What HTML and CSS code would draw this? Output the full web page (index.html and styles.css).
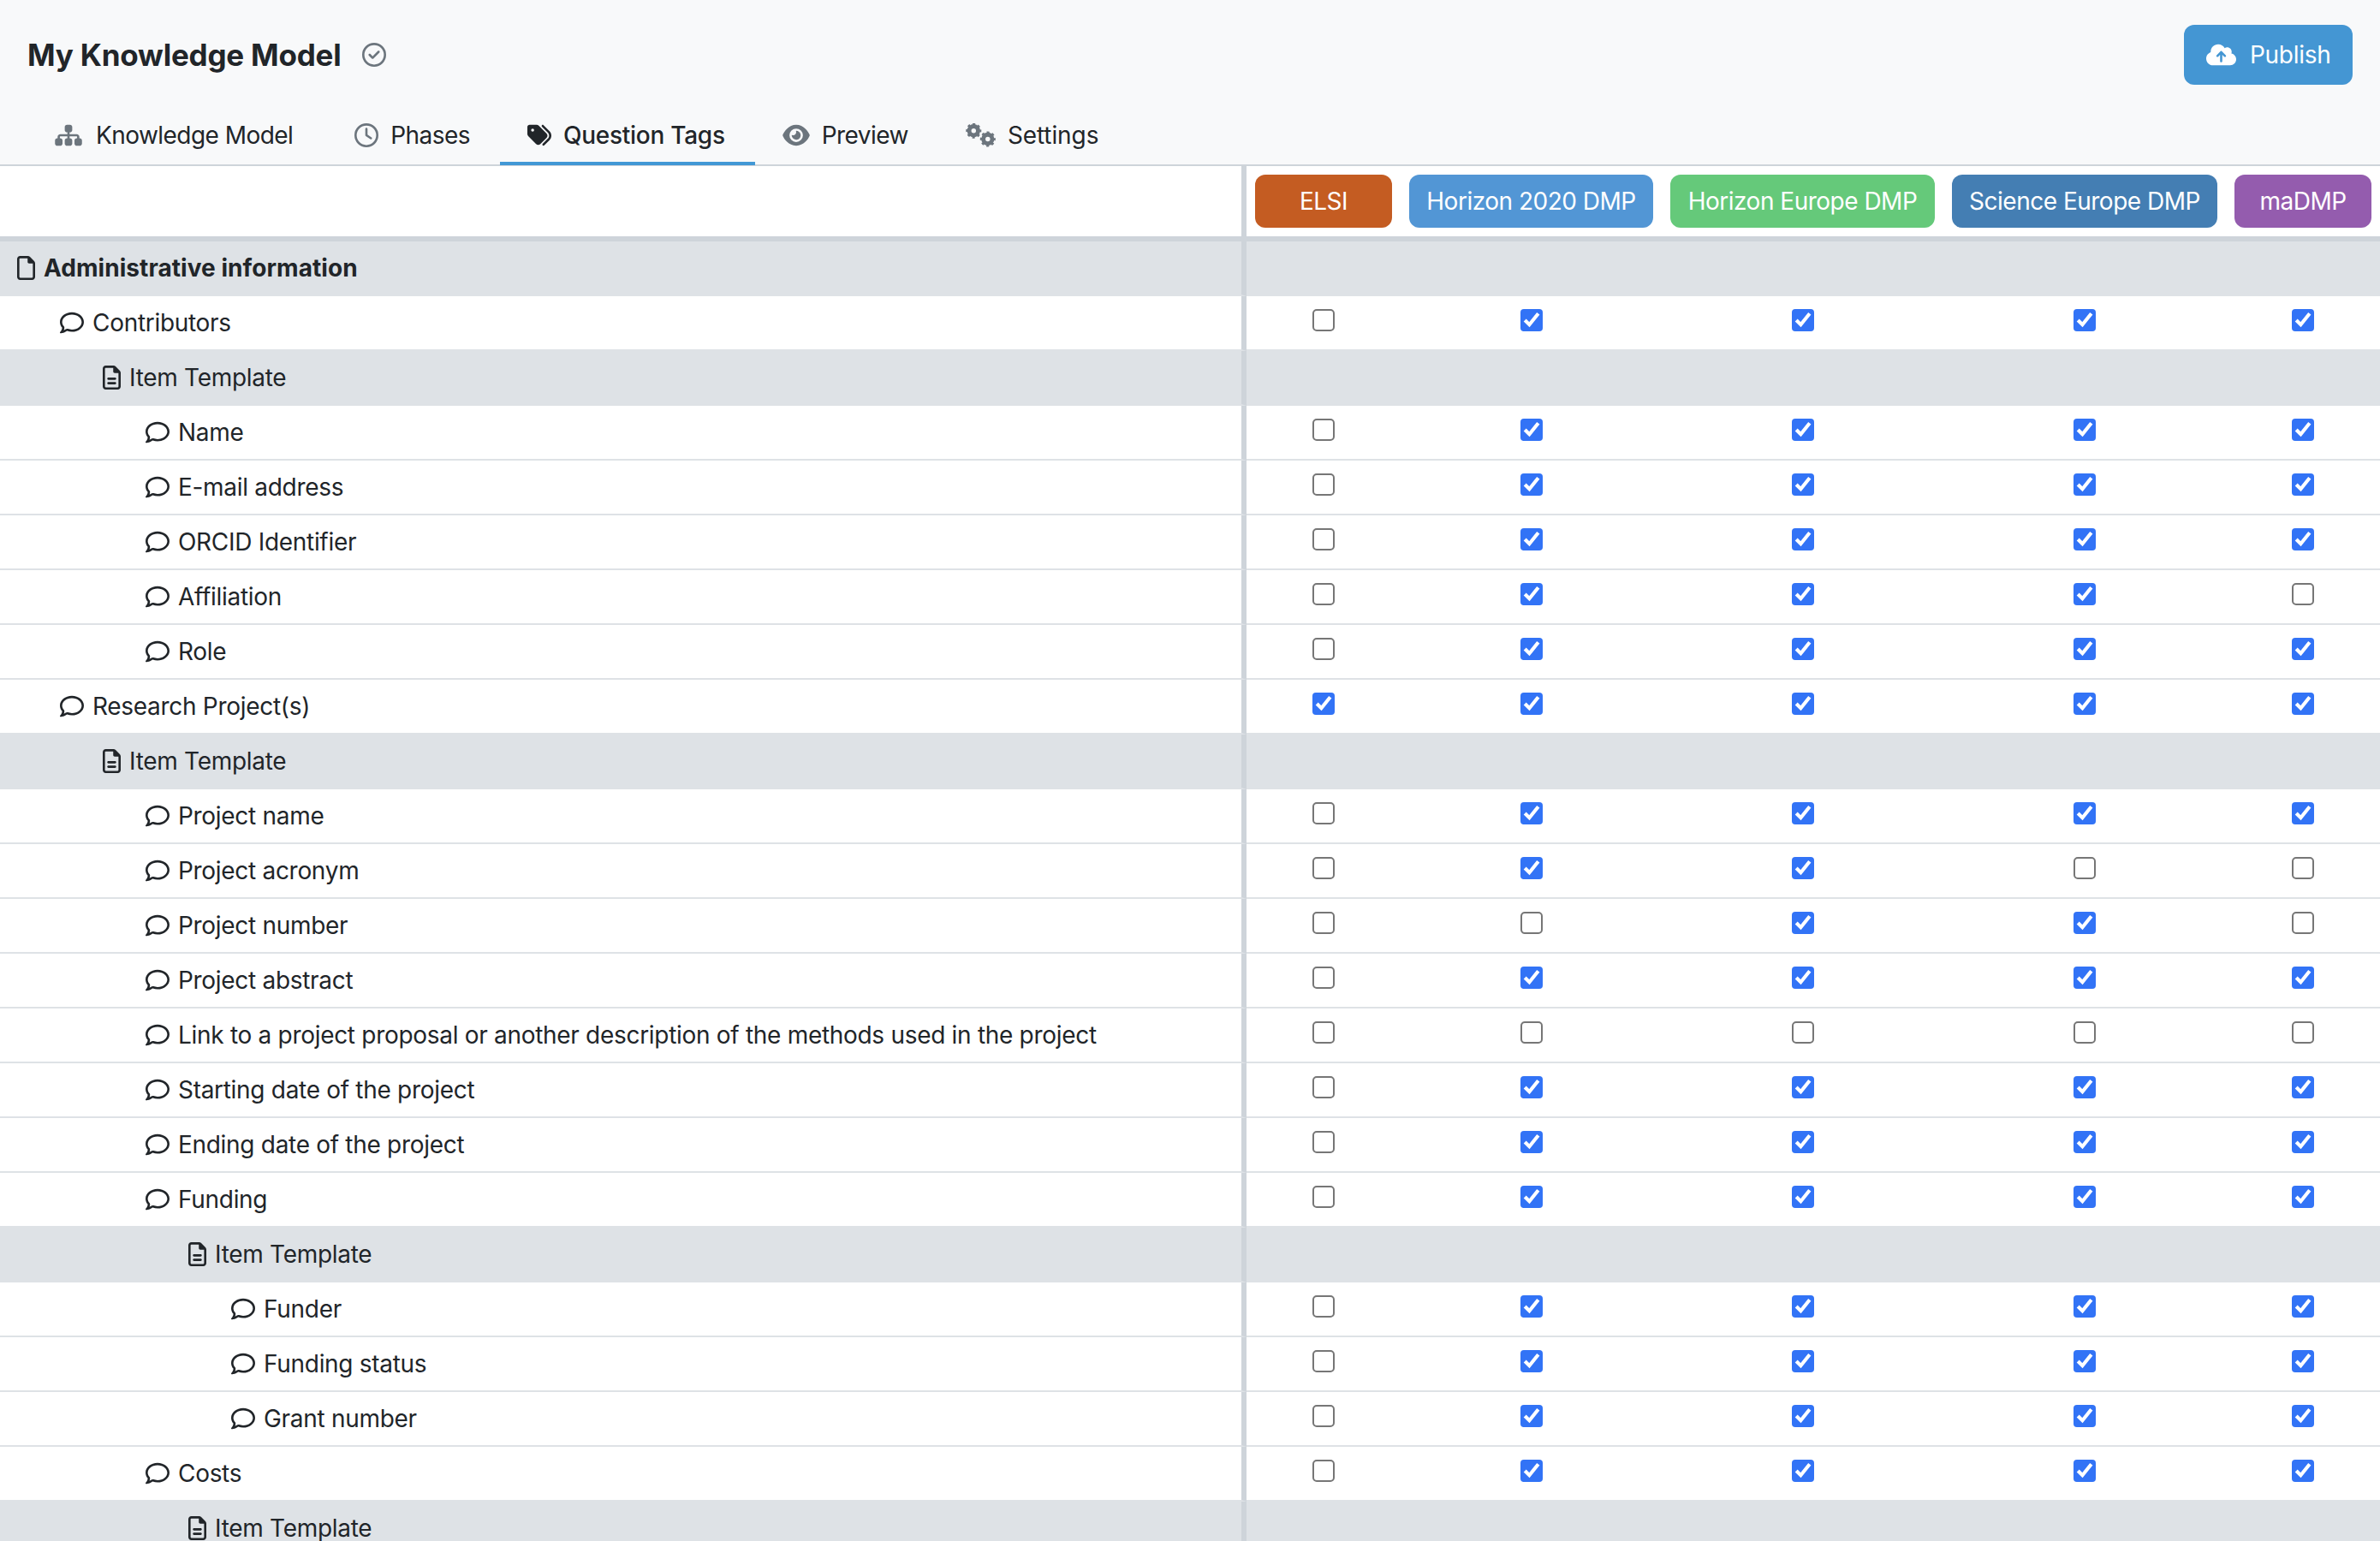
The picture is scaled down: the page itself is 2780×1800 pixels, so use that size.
FILE: index.html
```html
<!DOCTYPE html>
<html lang="en">
<head>
<meta charset="utf-8">
<title>My Knowledge Model</title>
<link rel="stylesheet" href="styles.css">
</head>
<body>
<svg class="defs" aria-hidden="true">
  <symbol id="i-comment" viewBox="0 0 512 512"><path d="M123.6 391.3c12.9-9.4 29.6-11.8 44.6-6.4c26.5 9.6 56.2 15.1 87.8 15.1c124.7 0 208-80.5 208-160s-83.3-160-208-160S48 160.5 48 240c0 32 12.4 62.8 35.7 89.2c8.6 9.7 12.8 22.5 11.8 35.5c-1.4 18.1-5.7 34.7-11.3 49.4c17-7.9 31.1-16.7 39.4-22.7zM21.2 431.9c1.8-2.7 3.5-5.4 5.1-8.1c10-16.6 19.5-38.4 21.4-62.9C17.7 326.8 0 285.1 0 240C0 125.1 114.6 32 256 32s256 93.1 256 208s-114.6 208-256 208c-37.1 0-72.3-6.4-104.1-17.9c-11.9 8.7-31.3 20.6-54.3 30.6c-15.1 6.6-32.3 12.6-50.1 16.1c-.8 .2-1.6 .3-2.4 .5c-4.4 .8-8.7 1.5-13.2 1.9c-.2 0-.5 .1-.7 .1c-5.1 .5-10.2 .8-15.3 .8c-6.5 0-12.3-3.9-14.8-9.9c-2.5-6-1.1-12.8 3.4-17.4c4.1-4.2 7.8-8.7 11.3-13.5c1.7-2.3 3.3-4.6 4.8-6.9c.1-.2 .2-.3 .3-.5z"/></symbol>
  <symbol id="i-file" viewBox="0 0 384 512"><path d="M320 464c8.8 0 16-7.2 16-16V160H256c-17.7 0-32-14.3-32-32V48H64c-8.8 0-16 7.2-16 16V448c0 8.8 7.2 16 16 16H320zM0 64C0 28.7 28.7 0 64 0H229.5c17 0 33.3 6.7 45.3 18.7l90.5 90.5c12 12 18.7 28.3 18.7 45.3V448c0 35.3-28.7 64-64 64H64c-35.3 0-64-28.7-64-64V64z"/></symbol>
  <symbol id="i-lines" viewBox="0 0 384 512"><path d="M320 464c8.8 0 16-7.2 16-16V160H256c-17.7 0-32-14.3-32-32V48H64c-8.8 0-16 7.2-16 16V448c0 8.8 7.2 16 16 16H320zM0 64C0 28.7 28.7 0 64 0H229.5c17 0 33.3 6.7 45.3 18.7l90.5 90.5c12 12 18.7 28.3 18.7 45.3V448c0 35.3-28.7 64-64 64H64c-35.3 0-64-28.7-64-64V64z"/><path d="M120 256c-13.3 0-24 10.7-24 24s10.7 24 24 24H264c13.3 0 24-10.7 24-24s-10.7-24-24-24H120zm0 96c-13.3 0-24 10.7-24 24s10.7 24 24 24H264c13.3 0 24-10.7 24-24s-10.7-24-24-24H120z"/></symbol>
</svg>

<header class="top">
  <div class="title-row">
    <div class="title-group">
      <h1 class="title">My Knowledge Model</h1>
      <svg class="saved" viewBox="0 0 512 512"><path d="M256 48a208 208 0 1 1 0 416 208 208 0 1 1 0-416zm0 464A256 256 0 1 0 256 0a256 256 0 1 0 0 512zM369 209c9.4-9.4 9.4-24.6 0-33.9s-24.6-9.4-33.9 0l-111 111-47-47c-9.4-9.4-24.6-9.4-33.9 0s-9.4 24.6 0 33.9l64 64c9.4 9.4 24.6 9.4 33.9 0L369 209z"/></svg>
    </div>
    <button class="publish" type="button">
      <svg class="publish-icon" viewBox="0 0 640 512"><path d="M144 480C64.5 480 0 415.5 0 336c0-62.8 40.2-116.2 96.2-135.9c-.1-2.7-.2-5.4-.2-8.1c0-88.4 71.6-160 160-160c59.3 0 111 32.2 138.7 80.2C409.9 102 428.3 96 448 96c53 0 96 43 96 96c0 12.2-2.3 23.8-6.4 34.6C596 238.4 640 290.1 640 352c0 70.7-57.3 128-128 128H144zm79-217c-9.4 9.4-9.4 24.6 0 33.9s24.6 9.4 33.9 0l39-39V392c0 13.3 10.7 24 24 24s24-10.7 24-24V257.9l39 39c9.4 9.4 24.6 9.4 33.9 0s9.4-24.6 0-33.9l-80-80c-9.4-9.4-24.6-9.4-33.9 0l-80 80z"/></svg>
      Publish
    </button>
  </div>
  <nav class="tabs">
    <a class="tab tab-km"><svg class="tab-icon wide" viewBox="0 0 576 512"><path d="M208 80c0-26.5 21.5-48 48-48h64c26.5 0 48 21.5 48 48v64c0 26.5-21.5 48-48 48h-8v40H464c30.9 0 56 25.1 56 56v32h8c26.5 0 48 21.5 48 48v64c0 26.5-21.5 48-48 48H464c-26.5 0-48-21.5-48-48V368c0-26.5 21.5-48 48-48h8V288c0-4.4-3.6-8-8-8H312v40h8c26.5 0 48 21.5 48 48v64c0 26.5-21.5 48-48 48H256c-26.5 0-48-21.5-48-48V368c0-26.5 21.5-48 48-48h8V280H112c-4.4 0-8 3.6-8 8v32h8c26.5 0 48 21.5 48 48v64c0 26.5-21.5 48-48 48H48c-26.5 0-48-21.5-48-48V368c0-26.5 21.5-48 48-48h8V288c0-30.9 25.1-56 56-56H264V192h-8c-26.5 0-48-21.5-48-48V80z"/></svg>Knowledge Model</a>
    <a class="tab tab-phases"><svg class="tab-icon" viewBox="0 0 512 512"><path d="M464 256A208 208 0 1 1 48 256a208 208 0 1 1 416 0zM0 256a256 256 0 1 0 512 0A256 256 0 1 0 0 256zM232 120V256c0 8 4 15.5 10.7 20l96 64c11 7.4 25.9 4.4 33.3-6.7s4.4-25.9-6.7-33.3L280 243.2V120c0-13.3-10.7-24-24-24s-24 10.7-24 24z"/></svg>Phases</a>
    <a class="tab active"><svg class="tab-icon" viewBox="0 0 512 512"><path d="M345 39.1L472.8 168.4c52.4 53 52.4 138.2 0 191.2L360.8 472.9c-9.3 9.4-24.5 9.5-33.9 .2s-9.5-24.5-.2-33.9L438.6 325.9c33.9-34.3 33.9-89.4 0-123.7L310.9 72.9c-9.3-9.4-9.2-24.6 .2-33.9s24.6-9.2 33.9 .2zM0 229.5V80C0 53.5 21.5 32 48 32H197.5c17 0 33.3 6.7 45.3 18.7l168 168c25 25 25 65.5 0 90.5L277.3 442.7c-25 25-65.5 25-90.5 0l-168-168C6.7 262.7 0 246.5 0 229.5zM144 144a32 32 0 1 0 -64 0 32 32 0 1 0 64 0z"/></svg>Question Tags</a>
    <a class="tab"><svg class="tab-icon wide" viewBox="0 0 576 512"><path d="M288 32c-80.8 0-145.5 36.8-192.6 80.6C48.6 156 17.3 208 2.5 243.7c-3.3 7.9-3.3 16.7 0 24.6C17.3 304 48.6 356 95.4 399.4C142.5 443.2 207.2 480 288 480s145.5-36.8 192.6-80.6c46.8-43.5 78.1-95.4 93-131.1c3.3-7.9 3.3-16.7 0-24.6c-14.9-35.7-46.2-87.7-93-131.1C433.5 68.8 368.8 32 288 32zM144 256a144 144 0 1 1 288 0 144 144 0 1 1 -288 0zm144-64c0 35.3-28.7 64-64 64c-7.1 0-13.9-1.2-20.3-3.3c-5.5-1.8-11.9 1.6-11.7 7.4c.3 6.9 1.3 13.8 3.2 20.7c13.7 51.2 66.4 81.6 117.6 67.9s81.6-66.4 67.9-117.6c-11.1-41.5-47.8-69.4-88.6-71.1c-5.8-.2-9.2 6.1-7.4 11.7c2.1 6.4 3.3 13.2 3.3 20.3z"/></svg>Preview</a>
    <a class="tab tab-settings"><svg class="tab-icon gears" viewBox="0 0 640 512"><g class="gear"><circle class="ring" cx="170" cy="159" r="95"/><circle class="teeth" cx="170" cy="159" r="145"/></g><g class="gear"><circle class="ring" cx="472" cy="337" r="95"/><circle class="teeth" cx="472" cy="337" r="145"/></g></svg>Settings</a>
  </nav>
</header>

<table class="tags-table">
  <colgroup><col class="c-main"><col class="c-elsi"><col class="c-h2020"><col class="c-he"><col class="c-se"><col class="c-ma"></colgroup>
  <thead>
    <tr>
      <th class="main"></th>
      <th><span class="tag elsi">ELSI</span></th>
      <th><span class="tag h2020">Horizon 2020 DMP</span></th>
      <th><span class="tag he">Horizon Europe DMP</span></th>
      <th><span class="tag se">Science Europe DMP</span></th>
      <th><span class="tag ma">maDMP</span></th>
    </tr>
  </thead>
  <tbody>
    <tr class="group"><td class="main"><div class="item lv0 strong"><svg class="ic file"><use href="#i-file"/></svg>Administrative information</div></td><td colspan="5"></td></tr>
    <tr><td class="main"><div class="item lv1"><svg class="ic bubble"><use href="#i-comment"/></svg>Contributors</div></td><td><input type="checkbox"></td><td><input type="checkbox" checked></td><td><input type="checkbox" checked></td><td><input type="checkbox" checked></td><td><input type="checkbox" checked></td></tr>
    <tr class="group"><td class="main"><div class="item lv2"><svg class="ic file"><use href="#i-lines"/></svg>Item Template</div></td><td colspan="5"></td></tr>
    <tr><td class="main"><div class="item lv3"><svg class="ic bubble"><use href="#i-comment"/></svg>Name</div></td><td><input type="checkbox"></td><td><input type="checkbox" checked></td><td><input type="checkbox" checked></td><td><input type="checkbox" checked></td><td><input type="checkbox" checked></td></tr>
    <tr><td class="main"><div class="item lv3"><svg class="ic bubble"><use href="#i-comment"/></svg>E-mail address</div></td><td><input type="checkbox"></td><td><input type="checkbox" checked></td><td><input type="checkbox" checked></td><td><input type="checkbox" checked></td><td><input type="checkbox" checked></td></tr>
    <tr><td class="main"><div class="item lv3"><svg class="ic bubble"><use href="#i-comment"/></svg>ORCID Identifier</div></td><td><input type="checkbox"></td><td><input type="checkbox" checked></td><td><input type="checkbox" checked></td><td><input type="checkbox" checked></td><td><input type="checkbox" checked></td></tr>
    <tr><td class="main"><div class="item lv3"><svg class="ic bubble"><use href="#i-comment"/></svg>Affiliation</div></td><td><input type="checkbox"></td><td><input type="checkbox" checked></td><td><input type="checkbox" checked></td><td><input type="checkbox" checked></td><td><input type="checkbox"></td></tr>
    <tr><td class="main"><div class="item lv3"><svg class="ic bubble"><use href="#i-comment"/></svg>Role</div></td><td><input type="checkbox"></td><td><input type="checkbox" checked></td><td><input type="checkbox" checked></td><td><input type="checkbox" checked></td><td><input type="checkbox" checked></td></tr>
    <tr><td class="main"><div class="item lv1"><svg class="ic bubble"><use href="#i-comment"/></svg>Research Project(s)</div></td><td><input type="checkbox" checked></td><td><input type="checkbox" checked></td><td><input type="checkbox" checked></td><td><input type="checkbox" checked></td><td><input type="checkbox" checked></td></tr>
    <tr class="group"><td class="main"><div class="item lv2"><svg class="ic file"><use href="#i-lines"/></svg>Item Template</div></td><td colspan="5"></td></tr>
    <tr><td class="main"><div class="item lv3"><svg class="ic bubble"><use href="#i-comment"/></svg>Project name</div></td><td><input type="checkbox"></td><td><input type="checkbox" checked></td><td><input type="checkbox" checked></td><td><input type="checkbox" checked></td><td><input type="checkbox" checked></td></tr>
    <tr><td class="main"><div class="item lv3"><svg class="ic bubble"><use href="#i-comment"/></svg>Project acronym</div></td><td><input type="checkbox"></td><td><input type="checkbox" checked></td><td><input type="checkbox" checked></td><td><input type="checkbox"></td><td><input type="checkbox"></td></tr>
    <tr><td class="main"><div class="item lv3"><svg class="ic bubble"><use href="#i-comment"/></svg>Project number</div></td><td><input type="checkbox"></td><td><input type="checkbox"></td><td><input type="checkbox" checked></td><td><input type="checkbox" checked></td><td><input type="checkbox"></td></tr>
    <tr><td class="main"><div class="item lv3"><svg class="ic bubble"><use href="#i-comment"/></svg>Project abstract</div></td><td><input type="checkbox"></td><td><input type="checkbox" checked></td><td><input type="checkbox" checked></td><td><input type="checkbox" checked></td><td><input type="checkbox" checked></td></tr>
    <tr><td class="main"><div class="item lv3"><svg class="ic bubble"><use href="#i-comment"/></svg>Link to a project proposal or another description of the methods used in the project</div></td><td><input type="checkbox"></td><td><input type="checkbox"></td><td><input type="checkbox"></td><td><input type="checkbox"></td><td><input type="checkbox"></td></tr>
    <tr><td class="main"><div class="item lv3"><svg class="ic bubble"><use href="#i-comment"/></svg>Starting date of the project</div></td><td><input type="checkbox"></td><td><input type="checkbox" checked></td><td><input type="checkbox" checked></td><td><input type="checkbox" checked></td><td><input type="checkbox" checked></td></tr>
    <tr><td class="main"><div class="item lv3"><svg class="ic bubble"><use href="#i-comment"/></svg>Ending date of the project</div></td><td><input type="checkbox"></td><td><input type="checkbox" checked></td><td><input type="checkbox" checked></td><td><input type="checkbox" checked></td><td><input type="checkbox" checked></td></tr>
    <tr><td class="main"><div class="item lv3"><svg class="ic bubble"><use href="#i-comment"/></svg>Funding</div></td><td><input type="checkbox"></td><td><input type="checkbox" checked></td><td><input type="checkbox" checked></td><td><input type="checkbox" checked></td><td><input type="checkbox" checked></td></tr>
    <tr class="group"><td class="main"><div class="item lv4"><svg class="ic file"><use href="#i-lines"/></svg>Item Template</div></td><td colspan="5"></td></tr>
    <tr><td class="main"><div class="item lv5"><svg class="ic bubble"><use href="#i-comment"/></svg>Funder</div></td><td><input type="checkbox"></td><td><input type="checkbox" checked></td><td><input type="checkbox" checked></td><td><input type="checkbox" checked></td><td><input type="checkbox" checked></td></tr>
    <tr><td class="main"><div class="item lv5"><svg class="ic bubble"><use href="#i-comment"/></svg>Funding status</div></td><td><input type="checkbox"></td><td><input type="checkbox" checked></td><td><input type="checkbox" checked></td><td><input type="checkbox" checked></td><td><input type="checkbox" checked></td></tr>
    <tr><td class="main"><div class="item lv5"><svg class="ic bubble"><use href="#i-comment"/></svg>Grant number</div></td><td><input type="checkbox"></td><td><input type="checkbox" checked></td><td><input type="checkbox" checked></td><td><input type="checkbox" checked></td><td><input type="checkbox" checked></td></tr>
    <tr><td class="main"><div class="item lv3"><svg class="ic bubble"><use href="#i-comment"/></svg>Costs</div></td><td><input type="checkbox"></td><td><input type="checkbox" checked></td><td><input type="checkbox" checked></td><td><input type="checkbox" checked></td><td><input type="checkbox" checked></td></tr>
    <tr class="group"><td class="main"><div class="item lv4"><svg class="ic file"><use href="#i-lines"/></svg>Item Template</div></td><td colspan="5"></td></tr>
  </tbody>
</table>
</body>
</html>
```

FILE: styles.css
```css
* { box-sizing: border-box; }
html, body { margin: 0; height: 1800px; overflow: hidden; }
body {
  background: #fff;
  color: #212529;
  font-family: Inter, "Liberation Sans", sans-serif;
  font-size: 28px;
  line-height: 42px;
  letter-spacing: -0.3px;
}
.defs { display: none; }

.top {
  background: #f8f9fa;
  height: 194px;
  border-bottom: 2px solid #ced4da;
  display: flex;
  flex-direction: column;
}
.title-row {
  display: flex;
  justify-content: space-between;
  align-items: center;
  height: 128px;
  padding: 0 32px;
}
.title-group { display: flex; align-items: center; gap: 24px; }
.title { margin: 0; font-size: 35px; font-weight: 700; line-height: 50px; letter-spacing: -0.2px; }
.saved { width: 28px; height: 28px; fill: #6c757d; }
.publish {
  display: flex;
  align-items: center;
  gap: 16px;
  height: 70px;
  width: 197px;
  padding: 0 26px;
  border: 0;
  border-radius: 12px;
  background: #4496d3;
  color: #fff;
  font: inherit;
  letter-spacing: -0.3px;
}
.publish-icon { width: 35px; height: 28px; fill: #fff; flex: none; }

.tabs { display: flex; padding-left: 32px; height: 64px; letter-spacing: -0.55px; }
.tab {
  display: flex;
  align-items: center;
  height: 65px;
  padding: 0 32px 2px;
  border-bottom: 4px solid transparent;
}
.tab.active { border-bottom-color: #4298d5; font-weight: 500; letter-spacing: -0.27px; padding-right: 35px; }
.tab-km { margin-right: 8px; }
.tab-phases { margin-right: 3px; }
.tab-icon { width: 28px; height: 28px; margin-right: 14px; fill: #6c757d; flex: none; }
.tab-icon.wide { width: 32px; }
.tab-km .tab-icon { margin-right: 16px; }
.tab.active .tab-icon { fill: #212529; }
.tab-settings { margin-left: 3px; letter-spacing: -0.1px; }
.tab-icon.gears { width: 35px; }
.gear circle { fill: none; stroke: #6c757d; }
.gear .ring { stroke-width: 90; }
.gear .teeth { stroke-width: 40; stroke-dasharray: 57 56.9; stroke-dashoffset: 28; }

.tags-table {
  width: 2780px;
  table-layout: fixed;
  border-collapse: separate;
  border-spacing: 0;
}
.c-main { width: 1456px; }
.c-elsi { width: 180px; }
.c-h2020 { width: 305px; }
.c-he { width: 329px; }
.c-se { width: 330px; }
.c-ma { width: 180px; }

th {
  height: 88px;
  padding: 10px 10px 10px;
  border-bottom: 6px solid #ced4da;
  font-weight: 400;
}
.tag {
  display: block;
  height: 62px;
  line-height: 62px;
  border-radius: 12px;
  color: #fff;
  text-align: center;
  white-space: nowrap;
  letter-spacing: -0.5px;
}
.elsi { background: #c45c22; }
.h2020 { background: #5296d5; }
.he { background: #65c97a; }
.se { background: #447eb3; }
.ma { background: #945cae; }

td {
  height: 64px;
  padding: 15px 0 0;
  border-bottom: 2px solid #dee2e6;
  text-align: center;
  vertical-align: top;
}
.group td { background: #dee2e6; }
td.main, th.main { border-right: 6px solid #ced4da; padding: 0; }
input[type="checkbox"] {
  display: block;
  zoom: 2;
  width: 13px;
  height: 13px;
  margin: 0 auto;
  accent-color: #3273f6;
}
.item {
  display: flex;
  align-items: center;
  height: 62px;
  text-align: left;
  white-space: nowrap;
}
.strong { font-weight: 700; letter-spacing: 0.05px; }
.lv0 { padding-left: 20px; }
.lv1 { padding-left: 70px; }
.lv2 { padding-left: 120px; }
.lv3 { padding-left: 170px; }
.lv4 { padding-left: 220px; }
.lv5 { padding-left: 270px; }
.ic { fill: #212529; flex: none; height: 28px; }
.ic.bubble { width: 28px; margin-right: 10px; }
.ic.file { width: 21px; margin-right: 10px; }
```
